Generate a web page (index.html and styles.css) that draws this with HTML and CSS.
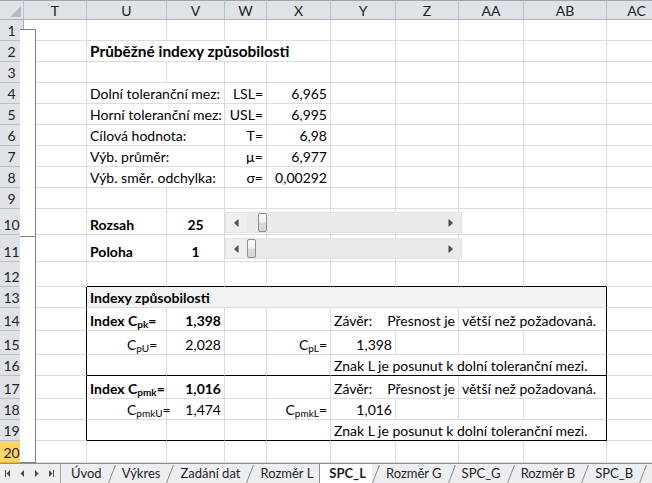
FILE: index.html
```html
<!DOCTYPE html>
<html lang="cs">
<head>
<meta charset="utf-8">
<title>SPC_L</title>
<link rel="stylesheet" href="styles.css">
</head>
<body>
<div class="page">
  <div class="sheet">
    <!-- header -->
    <div class="ch corner"><svg width="11" height="11" viewBox="0 0 11 11"><polygon points="11,0 11,11 0,11" fill="#b4bac3"/></svg></div>
    <div class="ch">T</div><div class="ch">U</div><div class="ch">V</div><div class="ch">W</div><div class="ch">X</div><div class="ch">Y</div><div class="ch">Z</div><div class="ch">AA</div><div class="ch">AB</div><div class="ch">AC</div>

    <!-- 1 -->
    <div class="rh">1</div><div class="c"></div><div class="c"></div><div class="c"></div><div class="c"></div><div class="c"></div><div class="c"></div><div class="c"></div><div class="c"></div><div class="c"></div><div class="c"></div>
    <!-- 2 -->
    <div class="rh">2</div><div class="c"></div><div class="c s4 b title">Průběžné indexy způsobilosti</div><div class="c"></div><div class="c"></div><div class="c"></div><div class="c"></div><div class="c"></div>
    <!-- 3 -->
    <div class="rh">3</div><div class="c"></div><div class="c"></div><div class="c"></div><div class="c"></div><div class="c"></div><div class="c"></div><div class="c"></div><div class="c"></div><div class="c"></div><div class="c"></div>
    <!-- 4 -->
    <div class="rh">4</div><div class="c"></div><div class="c s2">Dolní toleranční mez:</div><div class="c r">LSL=</div><div class="c r">6,965</div><div class="c"></div><div class="c"></div><div class="c"></div><div class="c"></div><div class="c"></div>
    <!-- 5 -->
    <div class="rh">5</div><div class="c"></div><div class="c s2">Horní toleranční mez:</div><div class="c r">USL=</div><div class="c r">6,995</div><div class="c"></div><div class="c"></div><div class="c"></div><div class="c"></div><div class="c"></div>
    <!-- 6 -->
    <div class="rh">6</div><div class="c"></div><div class="c s2">Cílová hodnota:</div><div class="c r">T=</div><div class="c r">6,98</div><div class="c"></div><div class="c"></div><div class="c"></div><div class="c"></div><div class="c"></div>
    <!-- 7 -->
    <div class="rh">7</div><div class="c"></div><div class="c s2">Výb. průměr:</div><div class="c r">µ=</div><div class="c r">6,977</div><div class="c"></div><div class="c"></div><div class="c"></div><div class="c"></div><div class="c"></div>
    <!-- 8 -->
    <div class="rh">8</div><div class="c"></div><div class="c s2">Výb. směr. odchylka:</div><div class="c r">σ=</div><div class="c r">0,00292</div><div class="c"></div><div class="c"></div><div class="c"></div><div class="c"></div><div class="c"></div>
    <!-- 9 -->
    <div class="rh">9</div><div class="c"></div><div class="c"></div><div class="c"></div><div class="c"></div><div class="c"></div><div class="c"></div><div class="c"></div><div class="c"></div><div class="c"></div><div class="c"></div>
    <!-- 10 -->
    <div class="rh">10</div><div class="c"></div><div class="c b">Rozsah</div><div class="c b ctr">25</div>
    <div class="c ctl">
      <div class="hs">
        <span class="hs-btn"><svg width="5" height="8" viewBox="0 0 5 8"><polygon points="4.5,0 4.5,8 0,4" fill="#4a4a4a"/></svg></span>
        <span class="hs-track"><span class="hs-thumb" style="margin-left:11px"></span></span>
        <span class="hs-btn end"><svg width="5" height="8" viewBox="0 0 5 8"><polygon points="0.5,0 0.5,8 5,4" fill="#4a4a4a"/></svg></span>
      </div>
    </div>
    <div class="c"></div><div class="c"></div><div class="c"></div><div class="c"></div><div class="c"></div><div class="c"></div>
    <!-- 11 -->
    <div class="rh">11</div><div class="c"></div><div class="c b">Poloha</div><div class="c b ctr">1</div>
    <div class="c ctl">
      <div class="hs">
        <span class="hs-btn"><svg width="5" height="8" viewBox="0 0 5 8"><polygon points="4.5,0 4.5,8 0,4" fill="#4a4a4a"/></svg></span>
        <span class="hs-track"><span class="hs-thumb" style="margin-left:0px"></span></span>
        <span class="hs-btn end"><svg width="5" height="8" viewBox="0 0 5 8"><polygon points="0.5,0 0.5,8 5,4" fill="#4a4a4a"/></svg></span>
      </div>
    </div>
    <div class="c"></div><div class="c"></div><div class="c"></div><div class="c"></div><div class="c"></div><div class="c"></div>
    <!-- 12 -->
    <div class="rh">12</div><div class="c"></div><div class="c bb"></div><div class="c bb"></div><div class="c bb"></div><div class="c bb"></div><div class="c bb"></div><div class="c bb"></div><div class="c bb"></div><div class="c bb"></div><div class="c"></div>
    <!-- 13 -->
    <div class="rh">13</div><div class="c br"></div><div class="c s8 b gray br">Indexy způsobilosti</div><div class="c"></div>
    <!-- 14 -->
    <div class="rh">14</div><div class="c br"></div><div class="c b"><span>Index C<sub class="sb">pk</sub>=</span></div><div class="c b r">1,398</div><div class="c"></div><div class="c"></div><div class="c s2 split"><span>Závěr:</span><span>Přesnost je</span></div><div class="c s2 br">větší než požadovaná.</div><div class="c"></div>
    <!-- 15 -->
    <div class="rh">15</div><div class="c br"></div><div class="c ind"><span>C<sub class="sb">pU</sub>=</span></div><div class="c r">2,028</div><div class="c"></div><div class="c r"><span>C<sub class="sb">pL</sub>=</span></div><div class="c r">1,398</div><div class="c"></div><div class="c"></div><div class="c br"></div><div class="c"></div>
    <!-- 16 -->
    <div class="rh">16</div><div class="c br"></div><div class="c bb"></div><div class="c bb"></div><div class="c bb"></div><div class="c bb"></div><div class="c s4 bb br">Znak L je posunut k dolní toleranční mezi.</div><div class="c"></div>
    <!-- 17 -->
    <div class="rh">17</div><div class="c br"></div><div class="c b"><span>Index C<sub class="sb">pmk</sub>=</span></div><div class="c b r">1,016</div><div class="c"></div><div class="c"></div><div class="c s2 split"><span>Závěr:</span><span>Přesnost je</span></div><div class="c s2 br">větší než požadovaná.</div><div class="c"></div>
    <!-- 18 -->
    <div class="rh">18</div><div class="c br"></div><div class="c ind"><span>C<sub class="sb">pmkU</sub>=</span></div><div class="c r">1,474</div><div class="c"></div><div class="c r"><span>C<sub class="sb">pmkL</sub>=</span></div><div class="c r">1,016</div><div class="c"></div><div class="c"></div><div class="c br"></div><div class="c"></div>
    <!-- 19 -->
    <div class="rh">19</div><div class="c br"></div><div class="c bb"></div><div class="c bb"></div><div class="c bb"></div><div class="c bb"></div><div class="c s4 bb br">Znak L je posunut k dolní toleranční mezi.</div><div class="c"></div>
    <!-- 20 -->
    <div class="rh sel">20</div><div class="c"></div><div class="c"></div><div class="c"></div><div class="c"></div><div class="c"></div><div class="c"></div><div class="c"></div><div class="c"></div><div class="c"></div><div class="c"></div>
  </div>

  <div class="bracket top"></div>
  <div class="bracket low"></div>

  <div class="tabs">
    <div class="nav">
      <svg width="60" height="19" viewBox="0 0 60 19">
        <rect x="5" y="6" width="1" height="7" fill="#4a4a4a"/>
        <polygon points="10,6 10,13 6.5,9.5" fill="#4a4a4a"/>
        <polygon points="24,6 24,13 20.5,9.5" fill="#4a4a4a"/>
        <polygon points="35,6 35,13 38.5,9.5" fill="#4a4a4a"/>
        <polygon points="49,6 49,13 52.5,9.5" fill="#4a4a4a"/>
        <rect x="53" y="6" width="1" height="7" fill="#4a4a4a"/>
      </svg>
    </div>
    <div class="tab first">Úvod</div><svg class="sl" width="8" height="19" viewBox="0 0 8 19"><line x1="0.5" y1="19" x2="7.5" y2="1" stroke="#8d8d8d"/></svg>
    <div class="tab">Výkres</div><svg class="sl" width="8" height="19" viewBox="0 0 8 19"><line x1="0.5" y1="19" x2="7.5" y2="1" stroke="#8d8d8d"/></svg>
    <div class="tab">Zadání dat</div><svg class="sl" width="8" height="19" viewBox="0 0 8 19"><line x1="0.5" y1="19" x2="7.5" y2="1" stroke="#8d8d8d"/></svg>
    <div class="tab">Rozměr L</div>
    <div class="tab on">SPC_L</div><svg class="sl" width="8" height="19" viewBox="0 0 8 19"><line x1="0.5" y1="19" x2="7.5" y2="1" stroke="#8d8d8d"/></svg>
    <div class="tab">Rozměr G</div><svg class="sl" width="8" height="19" viewBox="0 0 8 19"><line x1="0.5" y1="19" x2="7.5" y2="1" stroke="#8d8d8d"/></svg>
    <div class="tab">SPC_G</div><svg class="sl" width="8" height="19" viewBox="0 0 8 19"><line x1="0.5" y1="19" x2="7.5" y2="1" stroke="#8d8d8d"/></svg>
    <div class="tab">Rozměr B</div><svg class="sl" width="8" height="19" viewBox="0 0 8 19"><line x1="0.5" y1="19" x2="7.5" y2="1" stroke="#8d8d8d"/></svg>
    <div class="tab">SPC_B</div><svg class="sl" width="8" height="19" viewBox="0 0 8 19"><line x1="0.5" y1="19" x2="7.5" y2="1" stroke="#8d8d8d"/></svg>
  </div>
</div>
</body>
</html>
```

FILE: styles.css
```css
* { box-sizing: border-box; }
body { margin: 0; background: #fff; font-family: Lato, "Noto Sans", sans-serif; color: #000; }
.page { position: relative; width: 652px; height: 483px; overflow: hidden; }

.sheet {
  display: grid;
  grid-template-columns: 24px 63px 80px 58px 42px 64px 65px 63px 65px 83px 60px;
  grid-template-rows: 20px repeat(9, 21px) 26px 27px 25px 21px 23px 24px 21px 23px 21px 21px 22px;
  font-size: 14px;
  width: 670px;
}

.c {
  border-right: 1px solid #dadcdd;
  border-bottom: 1px solid #dadcdd;
  padding: 0 3px 1px;
  display: flex;
  align-items: flex-end;
  white-space: nowrap;
  line-height: 17px;
  min-width: 0;
}
.r { justify-content: flex-end; }
.ctr { justify-content: center; }
.b { font-weight: bold; }
.title { font-size: 15.4px; }
.s2 { grid-column: span 2; }
.s4 { grid-column: span 4; }
.s8 { grid-column: span 8; }
.bb { border-bottom-color: #000; }
.br { border-right-color: #000; }
.gray { background: #f2f2f2; }
.ind { padding-left: 40px; }
.split { justify-content: space-between; }
.sb { font-size: 10px; line-height: 0; vertical-align: -2px; }

.ch {
  background: #dfe3e8;
  border-top: 1px solid #9ea6b0;
  border-right: 1px solid #b9c0c9;
  border-bottom: 1px solid #a9b2bd;
  display: flex;
  align-items: center;
  justify-content: center;
  font-size: 14px;
  color: #222;
  padding-top: 1px;
}
.corner { justify-content: flex-end; align-items: flex-end; padding: 0 2px 2px 0; }

.rh {
  background: #dfe3e8;
  border-right: 1px solid #a9b2bd;
  border-bottom: 1px solid #b9c0c9;
  display: flex;
  align-items: flex-end;
  justify-content: center;
  line-height: 17px;
  padding-bottom: 1px;
  font-size: 14px;
  color: #222;
}
.rh.sel { background: #fbd56a; border-right-color: #eeae45; border-bottom-color: #eeae45; }

.ctl { padding: 0; align-items: flex-start; }
.hs {
  position: relative;
  z-index: 2;
  flex-shrink: 0;
  margin-top: 3px;
  width: 237px;
  height: 21px;
  background: #eaeaea;
  border: 1px solid #e3e3e3;
  display: flex;
}
.hs-btn {
  width: 21px;
  display: flex;
  align-items: center;
  justify-content: center;
  background: #efefef;
  flex-shrink: 0;
}
.hs-btn.end { background: #eaeaea; }
.hs-track { flex: 1; display: flex; }
.hs-thumb {
  width: 9px;
  height: 19px;
  border: 1px solid #8e8e8e;
  border-radius: 2px;
  background: linear-gradient(#fdfdfd 0%, #f1f1f1 45%, #d9d9d9 55%, #d4d4d4 100%);
}

.bracket {
  position: absolute;
  left: 20px;
  width: 16px;
  background: #fff;
  border: 1px solid #808080;
  border-left: none;
}
.bracket.top { top: 29px; height: 208px; }
.bracket.low { top: 237px; height: 226px; border-top: none; }

.tabs {
  display: flex;
  height: 20px;
  border-top: 1px solid #8e8e8e;
  background: #eceef1;
  font-size: 13px;
  color: #1e1e1e;
  position: relative;
  z-index: 3;
}
.nav { width: 61px; flex-shrink: 0; border-right: 1px solid #a3a3a3; }
.tab { display: flex; align-items: center; padding: 0 6px 1px 6px; flex-shrink: 0; }
.tab.first { padding-left: 10px; }
.tab.on { background: #fff; font-weight: bold; border-left: 1px solid #8e8e8e; padding-left: 9px; }
.sl { flex-shrink: 0; display: block; }
```
